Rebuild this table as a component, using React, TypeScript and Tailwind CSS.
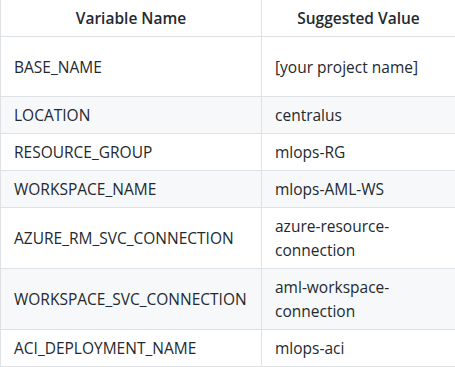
import React from "react";

const rows: [string, string, boolean][] = [
  ["BASE_NAME", "[your project name]", true],
  ["LOCATION", "centralus", false],
  ["RESOURCE_GROUP", "mlops-RG", false],
  ["WORKSPACE_NAME", "mlops-AML-WS", false],
  ["AZURE_RM_SVC_CONNECTION", "azure-resource-connection", false],
  ["WORKSPACE_SVC_CONNECTION", "aml-workspace-connection", false],
  ["ACI_DEPLOYMENT_NAME", "mlops-aci", false],
];

export default function App() {
  return (
    <div
      className="w-[455px] h-[367px] overflow-hidden bg-white text-[#24292e] text-[15.5px] leading-6"
      style={{ fontFamily: '"Open Sans", "Noto Sans", sans-serif' }}
    >
      <div className="w-[456px] border-l border-r border-[#dfe2e5]">
        <div className="grid grid-cols-[261px_193px] border-b border-[#dfe2e5] font-semibold">
          <div className="border-r border-[#dfe2e5] px-[13px] py-[6px] text-center">Variable Name</div>
          <div className="px-[13px] py-[6px] text-center">Suggested Value</div>
        </div>
        {rows.map(([k, v, tall], i) => (
          <div
            key={k}
            className={
              "grid grid-cols-[261px_193px] border-b border-[#dfe2e5] " +
              (i % 2 === 1 ? "bg-[#f6f8fa] " : "bg-white ") +
              (tall ? "h-[60px]" : "")
            }
          >
            <div className="border-r border-[#dfe2e5] px-[13px] py-[6px] flex items-center">{k}</div>
            <div className="px-[13px] py-[6px] flex items-center">{v}</div>
          </div>
        ))}
      </div>
    </div>
  );
}
